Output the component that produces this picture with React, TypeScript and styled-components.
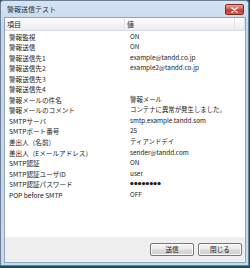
import React from 'react';
import styled, { createGlobalStyle } from 'styled-components';

const GlobalStyle = createGlobalStyle`
  html, body {
    margin: 0;
    padding: 0;
    background: #17505d;
  }
  body {
    width: 250px;
    height: 268px;
    overflow: hidden;
    font-family: "Noto Sans CJK JP", "Liberation Sans", sans-serif;
  }
`;

const WINDOW = styled.div`
  box-sizing: border-box;
  width: 249px;
  height: 266px;
  display: flex;
  flex-direction: column;
  border: 1px solid #6b7f96;
  border-radius: 3px 3px 0 0;
  background: linear-gradient(#d6e4f3, #c2d5eb 30px, #c6d9ee);
  padding: 0 2px 2px 3px;
`;

const TITLEBAR = styled.div`
  height: 16px;
  display: flex;
  align-items: center;
  justify-content: space-between;
  padding: 0 2px 0 3px;
`;

const TITLE = styled.div`
  font-size: 7px;
  color: #1e2c3c;
  line-height: 1;
`;

const CLOSEBTN = styled.div`
  box-sizing: border-box;
  width: 19px;
  height: 11px;
  margin-top: 1px;
  border: 1px solid #7d2a22;
  border-radius: 2px;
  background: linear-gradient(#e9a598, #d0625a 45%, #c1392b 55%, #d25d4a);
  display: flex;
  align-items: center;
  justify-content: center;
`;

const CONTENT = styled.div`
  flex: 1;
  display: flex;
  flex-direction: column;
  border: 1px solid #8fa5bf;
  background: #efefef;
`;

const LIST = styled.div`
  flex: 1;
  background: #fff;
  display: flex;
  flex-direction: column;
`;

const HEADER = styled.div`
  height: 12px;
  display: grid;
  grid-template-columns: 120px 110px 1fr;
  background: linear-gradient(#ffffff, #f3f4f6 50%, #eceef1);
  border-bottom: 1px solid #d8dce2;
`;

const HEADCELL = styled.div`
  font-size: 7px;
  line-height: 12px;
  color: #1f1f1f;
  padding-left: 2px;
  border-right: 1px solid #dfe2e7;
  white-space: nowrap;
`;

const ROWS = styled.div`
  padding-top: 0.5px;
`;

const ROW = styled.div`
  height: 10.55px;
  display: grid;
  grid-template-columns: 120px 1fr;
`;

const CELL = styled.div<{ $value?: boolean }>`
  font-size: ${(p) => (p.$value ? '6.4px' : '6.6px')};
  line-height: 10.55px;
  color: #222;
  padding-left: ${(p) => (p.$value ? '5px' : '4px')};
  white-space: nowrap;
`;

const DOTS = styled.span`
  font-size: 3.6px;
  letter-spacing: 0.3px;
  vertical-align: 1px;
`;

const FOOTER = styled.div`
  height: 25px;
  display: flex;
  justify-content: flex-end;
  align-items: center;
  gap: 4px;
  padding-right: 3px;
`;

const BUTTON = styled.div`
  box-sizing: border-box;
  width: 44px;
  height: 13px;
  border: 1px solid #777;
  border-radius: 2px;
  background: linear-gradient(#f6f6f6, #e9e9e9 48%, #dcdcdc 52%, #cfcfcf);
  box-shadow: inset 0 0 0 1px #fbfbfb;
  font-size: 6.6px;
  line-height: 11px;
  text-align: center;
  color: #1a1a1a;
`;

const rows = [
  ['警報監視', 'ON'],
  ['警報送信', 'ON'],
  ['警報送信先1', 'example@tandd.co.jp'],
  ['警報送信先2', 'example2@tandd.co.jp'],
  ['警報送信先3', ''],
  ['警報送信先4', ''],
  ['警報メールの件名', '警報メール'],
  ['警報メールのコメント', 'コンテナに異常が発生しました。'],
  ['SMTPサーバ', 'smtp.example.tandd.som'],
  ['SMTPポート番号', '25'],
  ['差出人（名前）', 'ティアンドデイ'],
  ['差出人（Eメールアドレス）', 'sender@tandd.com'],
  ['SMTP認証', 'ON'],
  ['SMTP認証ユーザID', 'user'],
  ['SMTP認証パスワード', '●●●●●●●●'],
  ['POP before SMTP', 'OFF'],
];

function App() {
  return (
    <>
      <GlobalStyle />
      <WINDOW>
        <TITLEBAR>
          <TITLE>警報送信テスト</TITLE>
          <CLOSEBTN>
            <svg width="7" height="6" viewBox="0 0 7 6">
              <path d="M1 1 L6 5 M6 1 L1 5" stroke="#fff" strokeWidth="1.6" strokeLinecap="round" />
            </svg>
          </CLOSEBTN>
        </TITLEBAR>
        <CONTENT>
          <LIST>
            <HEADER>
              <HEADCELL>項目</HEADCELL>
              <HEADCELL>値</HEADCELL>
              <HEADCELL />
            </HEADER>
            <ROWS>
              {rows.map(([name, value]) => (
                <ROW key={name}>
                  <CELL>{name}</CELL>
                  <CELL $value>
                    {value.startsWith('●') ? <DOTS>{value}</DOTS> : value}
                  </CELL>
                </ROW>
              ))}
            </ROWS>
          </LIST>
          <FOOTER>
            <BUTTON>送信</BUTTON>
            <BUTTON>閉じる</BUTTON>
          </FOOTER>
        </CONTENT>
      </WINDOW>
    </>
  );
}

export default App;
